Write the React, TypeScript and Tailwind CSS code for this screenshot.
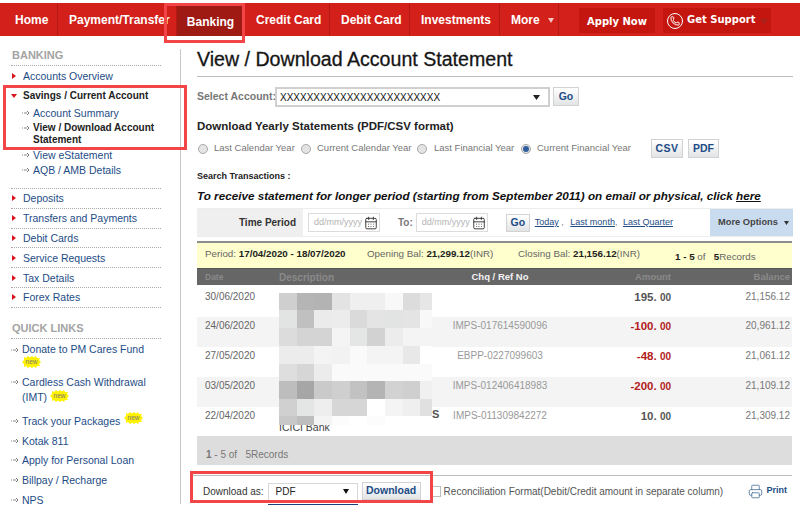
import React from 'react';
import { CalendarDays, Phone, Printer } from 'lucide-react';

const navItems = [
  { label: 'Home', width: 'w-[58px] pl-[15px]' },
  { label: 'Payment/Transfer', width: 'w-[119px] pl-[11px]' },
  { label: 'Banking', width: 'w-[68px]', active: true },
  { label: 'Credit Card', width: 'w-[85px] pl-[11px]' },
  { label: 'Debit Card', width: 'w-[80px] pl-[11px]' },
  { label: 'Investments', width: 'w-[90px] pl-[11px]' },
];

const sideLinks = ['Deposits', 'Transfers and Payments', 'Debit Cards', 'Service Requests', 'Tax Details', 'Forex Rates'];

const rows = [
  { date: '30/06/2020', ref: '', amount: '195.', neg: false, balance: '21,156.12', h: 'h-[32px] pt-[5px]' },
  { date: '24/06/2020', ref: 'IMPS-017614590096', amount: '-100.', neg: true, balance: '20,961.12', h: 'h-[30px] pt-[2px]', alt: true },
  { date: '27/05/2020', ref: 'EBPP-0227099603', amount: '-48.', neg: true, balance: '21,061.12', h: 'h-[30px] pt-[2px]' },
  { date: '03/05/2020', ref: 'IMPS-012406418983', amount: '-200.', neg: true, balance: '21,109.12', h: 'h-[30px] pt-[2px]', alt: true },
  { date: '22/04/2020', ref: 'IMPS-011309842272', amount: '10.', neg: false, balance: '21,309.12', h: 'h-[29px] pt-[2px]' },
];

const blurCells = [
  'bg-[#cfcfcf]', 'bg-[#b5b5b5]', 'bg-[#b3b3b3]', 'bg-[#e3e3e3]', 'bg-[#efefef]', 'bg-[#efefef]', 'bg-[#f8f8f8]', 'bg-[#dcdcdc]', 'bg-[#e6e6e6]',
  'bg-[#e2e4e4]', 'bg-[#c0c0c0]', 'bg-[#ebebeb]', 'bg-[#ececec]', 'bg-[#dadada]', 'bg-[#e4e4e4]', 'bg-[#e2e4e4]', 'bg-[#e4e4e4]', 'bg-[#f8f8f8]',
  'bg-[#dcdcdc]', 'bg-[#d4d4d4]', 'bg-[#d4d4d4]', 'bg-[#f4f4f4]', 'bg-[#e4e6e6]', 'bg-[#d2d2d2]', 'bg-[#ececec]', 'bg-[#f4f4f4]', 'bg-[#f4f4f4]',
  'bg-[#ececec]', 'bg-[#ececec]', 'bg-[#f4f4f4]', 'bg-[#f2f2f2]', 'bg-[#fafafa]', 'bg-[#f4f4f4]', 'bg-[#f4f4f4]', 'bg-[#e8e8e8]', 'bg-[#ffffff]',
  'bg-[#dedede]', 'bg-[#d6d6d6]', 'bg-[#ececec]', 'bg-[#fafafa]', 'bg-[#fafafa]', 'bg-[#fafafa]', 'bg-[#fafafa]', 'bg-[#fafafa]', 'bg-[#fafafa]',
  'bg-[#bdbdbd]', 'bg-[#a6a6a6]', 'bg-[#cacaca]', 'bg-[#cfcfcf]', 'bg-[#c2c2c2]', 'bg-[#b4b4b4]', 'bg-[#d2d2d2]', 'bg-[#cfcfcf]', 'bg-[#f0f0f0]',
  'bg-[#d0d0d0]', 'bg-[#e4e6e6]', 'bg-[#eeeeee]', 'bg-[#d6d6d6]', 'bg-[#d6d6d6]', 'bg-[#ffffff]', 'bg-[#f4f4f4]', 'bg-[#efefef]', 'bg-[#e0e0e0]',
  'bg-[#c8c8c8]', 'bg-[#bebebe]', 'bg-[#f4f4f4]', 'bg-[#fcfcfc]', 'bg-[#ffffff]', 'bg-[#fcfcfc]', 'bg-[#ffffff]', 'bg-[#ffffff]', 'bg-[#ffffff]',
];

const RedBullet = ({ down }: { down?: boolean }) => (
  <svg width="6" height="6" viewBox="0 0 6 6" className="shrink-0">
    <polygon points={down ? '0,1 6,1 3,5' : '1,0 5,3 1,6'} fill="#d9141c" />
  </svg>
);

const ArrowBullet = () => (
  <svg width="8" height="6" viewBox="0 0 8 6" className="shrink-0">
    <path d="M0 3h1M2 3h3" stroke="#888" strokeWidth="1" fill="none" />
    <path d="M5 1l2 2-2 2" stroke="#777" strokeWidth="1" fill="none" />
  </svg>
);

const NewBadge = () => (
  <svg width="19" height="12" viewBox="0 0 19 12" className="inline-block align-top">
    <polygon
      points="2,1 4,2 6,0 8,1.500 10,0 12,1.500 14,0 15,2 18,2 17,4 19,6 17,8 18,10 15,10 14,12 12,10.500 10,12 8,10.500 6,12 4,10 2,11 2,8 0,6 2,4"
      fill="#fff200"
    />
    <text x="9.500" y="8" textAnchor="middle" fontSize="6.500" fill="#777">new</text>
  </svg>
);

const Radio = ({ on }: { on?: boolean }) => (
  <span className="w-[10px] h-[10px] rounded-full border border-[#a8a8a8] bg-[#e4e4e4] flex items-center justify-center shrink-0">
    {on && <span className="w-[6px] h-[6px] rounded-full bg-[#2f5f9e]" />}
  </span>
);

const GreyButton = ({ label, className }: { label: string; className: string }) => (
  <button
    type="button"
    className={`border border-[#d2d2d2] bg-gradient-to-b from-white to-[#e2e4e6] text-[#1d4c86] font-bold flex items-center justify-center ${className}`}
  >
    {label}
  </button>
);

const DateBox = ({ className }: { className: string }) => (
  <span className={`w-[72px] h-[19px] border border-[#dcdcdc] flex items-center justify-between pl-[5px] pr-[1px] text-[9px] text-[#b4b4b4] ${className}`}>
    dd/mm/yyyy
    <CalendarDays size={14} strokeWidth={1.6} className="text-[#333]" />
  </span>
);

const App = () => {
  return (
    <div className="relative w-[800px] h-[505px] overflow-hidden bg-white pt-[3px] font-['Liberation_Sans',Arial,sans-serif]">
      {/* top nav */}
      <nav className="flex h-[33px] bg-[#d3201a] text-white text-[12px] font-bold">
        {navItems.map((item) => (
          <div
            key={item.label}
            className={`flex items-center overflow-hidden whitespace-nowrap border-r border-[#b31a14] pt-[1px] ${item.width} ${
              item.active ? 'bg-[#a01a14] justify-center mt-[3px] h-[30px]' : 'h-full'
            }`}
          >
            {item.label}
          </div>
        ))}
        <div className="w-[59px] h-full flex items-center gap-[8px] pl-[11px] pt-[1px] border-r border-[#b31a14]">
          More
          <svg width="6" height="5" viewBox="0 0 6 5">
            <polygon points="0,0 6,0 3,5" fill="#f3c4c0" />
          </svg>
        </div>
        <div className="ml-[20px] mt-[5px] w-[76px] h-[25px] bg-[#c4150e] flex items-center justify-center pt-[1px] font-['DejaVu_Sans',sans-serif] text-[10px]">
          Apply Now
        </div>
        <div className="ml-[8px] mt-[5px] w-[108px] h-[25px] bg-[#c4150e] flex items-center pl-[4px] font-['DejaVu_Sans',sans-serif] text-[10px]">
          <span className="w-[16px] h-[16px] rounded-full border border-white flex items-center justify-center mr-[4px]">
            <Phone size={10} strokeWidth={2.4} />
          </span>
          <span className="-mt-[3px]">Get Support</span>
          <svg width="8" height="5" viewBox="0 0 8 5" className="ml-[5px] mt-[2px]">
            <polygon points="0,0 8,0 4,5" fill="#a8231c" />
          </svg>
        </div>
      </nav>

      <div className="flex">
        {/* sidebar */}
        <aside className="w-[181px] h-[469px] pt-[14px] shrink-0">
          <div className="w-[181px] h-full border-r border-[#c8c8c8] pl-[11px]">
            <div className="w-[150px] text-[10.500px] leading-[12px] text-[#1d4c86]">
              <div className="h-[13px] pl-[1px] text-[11px] font-bold text-[#a3a3a3] -mt-[1px]">BANKING</div>
              <div className="border-t border-dotted border-[#a8a8a8] mt-[3px]" />
              <div className="h-[20px] flex items-center gap-[6px]">
                <RedBullet />
                Accounts Overview
              </div>
              <div className="h-[19px] flex items-center gap-[6px] font-bold text-[10px] text-[#222]">
                <RedBullet down />
                Savings / Current Account
              </div>
              <div className="pl-[11px]">
                <div className="h-[15px] flex items-center gap-[3px]">
                  <ArrowBullet />
                  Account Summary
                </div>
                <div className="flex gap-[3px] pt-[2px] font-bold text-[10px] text-[#222] h-[27px]">
                  <span className="pt-[3px]">
                    <ArrowBullet />
                  </span>
                  <span>
                    View / Download Account
                    <br />
                    Statement
                  </span>
                </div>
                <div className="h-[15px] flex items-center gap-[3px]">
                  <ArrowBullet />
                  View eStatement
                </div>
                <div className="h-[15px] flex items-center gap-[3px]">
                  <ArrowBullet />
                  AQB / AMB Details
                </div>
              </div>
              <div className="border-b border-dotted border-[#a8a8a8] h-[12px]" />
              {sideLinks.map((link) => (
                <div key={link} className="h-[19.800px] flex items-center gap-[6px] border-b border-dotted border-[#a8a8a8]">
                  <RedBullet />
                  {link}
                </div>
              ))}
              <div className="pl-[1px] mt-[14px] h-[13px] text-[11px] font-bold text-[#a3a3a3]">QUICK LINKS</div>
              <div className="border-t border-dotted border-[#a8a8a8] mt-[3px] mb-[3px]" />
              <div className="font-normal">
                <div className="flex gap-[3px] pt-[1px]">
                  <span className="pt-[4px]">
                    <ArrowBullet />
                  </span>
                  <span className="leading-[12px]">
                    Donate to PM Cares Fund
                    <br />
                    <span className="inline-block h-[14px] pt-[1px]">
                      <NewBadge />
                    </span>
                  </span>
                </div>
                <div className="flex gap-[3px] mt-[6px]">
                  <span className="pt-[4px]">
                    <ArrowBullet />
                  </span>
                  <span className="leading-[15px]">
                    Cardless Cash Withdrawal
                    <br />
                    (IMT) <NewBadge />
                  </span>
                </div>
                <div className="flex gap-[3px] items-center h-[20px] mt-[6px]">
                  <ArrowBullet />
                  Track your Packages
                  <span className="ml-[1px] -mt-[5px] h-[12px]">
                    <NewBadge />
                  </span>
                </div>
                {['Kotak 811', 'Apply for Personal Loan', 'Billpay / Recharge', 'NPS'].map((q) => (
                  <div key={q} className="h-[19.800px] flex items-center gap-[3px]">
                    <ArrowBullet />
                    {q}
                  </div>
                ))}
              </div>
            </div>
          </div>
        </aside>

        {/* main column */}
        <main className="ml-[16px] w-[596px] text-[#777]">
          <h1 className="pt-[10px] h-[41px] text-[19.600px] leading-[26px] text-[#151515] [-webkit-text-stroke:0.3px_#151515] whitespace-nowrap border-b border-[#bdbdbd]">
            View / Download Account Statement
          </h1>

          <div className="flex items-center h-[20px] mt-[10px] text-[10.500px] font-bold whitespace-nowrap">
            <span className="w-[78px]">Select Account:</span>
            <span className="w-[275px] h-[20px] border-2 border-[#d0d0d0] flex items-center justify-between pl-[3px] pr-[8px] text-[10px] font-normal text-[#111]">
              XXXXXXXXXXXXXXXXXXXXXXXX
              <svg width="7" height="5" viewBox="0 0 7 5">
                <polygon points="0,0 7,0 3.500,5" fill="#222" />
              </svg>
            </span>
            <GreyButton label="Go" className="ml-[3px] w-[26px] h-[19px] -mt-[1px] text-[10.500px]" />
          </div>

          <div className="mt-[12px] h-[14px] text-[11.500px] leading-[14px] font-bold text-[#222]">
            Download Yearly Statements (PDF/CSV format)
          </div>

          <div className="flex items-center h-[19px] mt-[6px] pl-[1px] text-[9.500px] whitespace-nowrap">
            <Radio />
            <span className="ml-[6px] w-[87px]">Last Calendar Year</span>
            <Radio />
            <span className="ml-[6px] w-[100px]">Current Calendar Year</span>
            <Radio />
            <span className="ml-[7px] w-[87px]">Last Financial Year</span>
            <Radio on />
            <span className="ml-[6px] w-[114px]">Current Financial Year</span>
            <GreyButton label="CSV" className="w-[32px] h-[19px] text-[10.500px] tracking-[0.5px]" />
            <GreyButton label="PDF" className="ml-[5px] w-[31px] h-[19px] text-[10.500px]" />
          </div>

          <div className="mt-[12px] h-[12px] text-[9px] leading-[12px] font-bold text-[#222]">Search Transactions :</div>

          <div className="mt-[6px] h-[16px] text-[11.700px] leading-[16px] font-bold italic text-[#111] whitespace-nowrap">
            To receive statement for longer period (starting from September 2011) on email or physical, click <span className="underline">here</span>
          </div>

          {/* date filter */}
          <div className="flex items-center h-[29px] mt-[4px] border-t border-b border-[#ededed]">
            <div className="w-[106px] h-full bg-[#efefef] flex items-center justify-end pr-[7px] text-[10px] font-bold text-[#333]">Time Period</div>
            <DateBox className="ml-[5px]" />
            <span className="ml-[18px] mr-[3px] text-[10px] font-bold">To:</span>
            <DateBox />
            <GreyButton label="Go" className="ml-[18px] w-[24px] h-[18px] text-[10.500px]" />
            <span className="ml-[5px] text-[9px] text-[#1d4c86] whitespace-nowrap">
              <span className="underline">Today</span>
              <span className="text-[#888]"> , </span>
              <span className="ml-[4px] underline">Last month</span>
              <span className="text-[#888]">, </span>
              <span className="ml-[3px] underline">Last Quarter</span>
            </span>
            <div className="ml-auto w-[83px] h-full bg-[#c9dcef] flex items-center justify-between pl-[8px] pr-[4px] text-[9.300px] font-bold text-[#444]">
              More Options
              <svg width="5" height="4" viewBox="0 0 5 4">
                <polygon points="0,0 5,0 2.500,4" fill="#333" />
              </svg>
            </div>
          </div>

          {/* period bar */}
          <div className="relative flex w-[595px] h-[27px] mt-[4px] border-t-2 border-[#8d8d8d] bg-[#ffffcd] pl-[8px] pt-[4px] text-[9.800px] text-[#666] whitespace-nowrap">
            <span className="w-[162px]">
              Period: <b className="text-[#222]">17/04/2020 - 18/07/2020</b>
            </span>
            <span className="w-[151px]">
              Opening Bal: <b className="text-[#222]">21,299.12</b>(INR)
            </span>
            <span className="w-[157px]">
              Closing Bal: <b className="text-[#222]">21,156.12</b>(INR)
            </span>
            <span className="mt-[3px] text-[#666]">
              <b className="text-[#222]">1 - 5</b> of &nbsp; <b className="text-[#222]">5</b>Records
            </span>
          </div>

          {/* table */}
          <div className="grid grid-cols-[82px_170px_102px_120px_121px] h-[17px] items-center bg-[#666666] border-t border-[#555] text-[9.500px] font-bold text-[#8a8a8a] w-[595px]">
            <span className="pl-[8px] text-[8.500px]">Date</span>
            <span className="text-[10px]">Description</span>
            <span className="text-center text-[#f2f2f2] text-[9.500px]">Chq / Ref No</span>
            <span className="text-right">Amount</span>
            <span className="text-right pr-[2px]">Balance</span>
          </div>
          <div className="relative w-[595px]">
            {rows.map((row) => (
              <div
                key={row.date}
                className={`grid grid-cols-[82px_170px_102px_120px_121px] text-[10px] leading-[14px] ${row.h} ${row.alt ? 'bg-[#f4f4f4]' : ''}`}
              >
                <span className="pl-[8px] text-[#666]">{row.date}</span>
                <span />
                <span className="text-center text-[#999]">{row.ref}</span>
                <span className={`text-right font-bold text-[11.500px] ${row.neg ? 'text-[#b3201c]' : 'text-[#555]'}`}>
                  {row.amount} <span className="text-[10px]">00</span>
                </span>
                <span className="text-right pr-[2px] text-[#777]">{row.balance}</span>
              </div>
            ))}
            <span className="absolute left-[235px] top-[121px] text-[11px] font-bold text-[#555]">S</span>
            <span className="absolute left-[82px] top-[136px] text-[10.500px] leading-[13px] text-[#444]">ICICI Bank</span>
            {/* masked description column */}
            <div className="absolute left-[82px] top-[8px] w-[153px] h-[132px] grid grid-cols-[18px_17.300px_17.700px_18px_17.300px_18px_17.600px_17px_12px] grid-rows-[17.400px_17.600px_17.700px_18px_17.700px_17.300px_17.700px_8.500px]">
              {blurCells.map((c, i) => (
                <span key={i} className={c} />
              ))}
            </div>
          </div>
          <div className="w-[595px] h-[29px] bg-[#dddddd] pl-[9px] pt-[13px] text-[10px] leading-[12px] text-[#777]">
            <b>1</b> - 5 of &nbsp; 5Records
          </div>

          {/* download row */}
          <div className="mt-[10px] -ml-[6px] w-[601px] border-t border-[#bdbdbd] flex items-center h-[31px] text-[10px] text-[#333] whitespace-nowrap">
            <span className="ml-[12px] text-[#333]">Download as:</span>
            <span className="relative ml-[4px] w-[90px] h-[18px] mt-[1px] border border-[#d8d8d8] flex items-center justify-between pl-[7px] pr-[8px] text-[#222] font-normal">
              PDF
              <svg width="6" height="5" viewBox="0 0 6 5">
                <polygon points="0,0 6,0 3,5" fill="#111" />
              </svg>
              <span className="absolute -left-[1px] -right-[1px] top-[20px] h-[1px] bg-[#1d3f7a]" />
            </span>
            <GreyButton label="Download" className="ml-[4px] w-[59px] h-[18px] text-[10.500px]" />
            <span className="ml-[9px] w-[11px] h-[11px] border border-[#bdbdbd] shrink-0" />
            <span className="ml-[3px] text-[#555] text-[10px]">Reconciliation Format(Debit/Credit amount in separate column)</span>
            <span className="ml-auto mr-[5px] flex items-center gap-[3px] text-[#1d4c86] font-bold text-[9px]">
              <Printer size={15} strokeWidth={1.3} className="text-[#4a7397]" />
              Print
            </span>
          </div>
        </main>
      </div>

      {/* red annotation boxes drawn on top of the screenshot */}
      <div className="absolute left-[164px] top-[3px] w-[81px] h-[40px] border-[3px] border-[#f24548]" />
      <div className="absolute left-[3px] top-[85px] w-[184px] h-[65px] border-[3px] border-[#f24548]" />
      <div className="absolute left-[190px] top-[471px] w-[243px] h-[32px] border-[3px] border-[#f24548]" />
    </div>
  );
};

export default App;
